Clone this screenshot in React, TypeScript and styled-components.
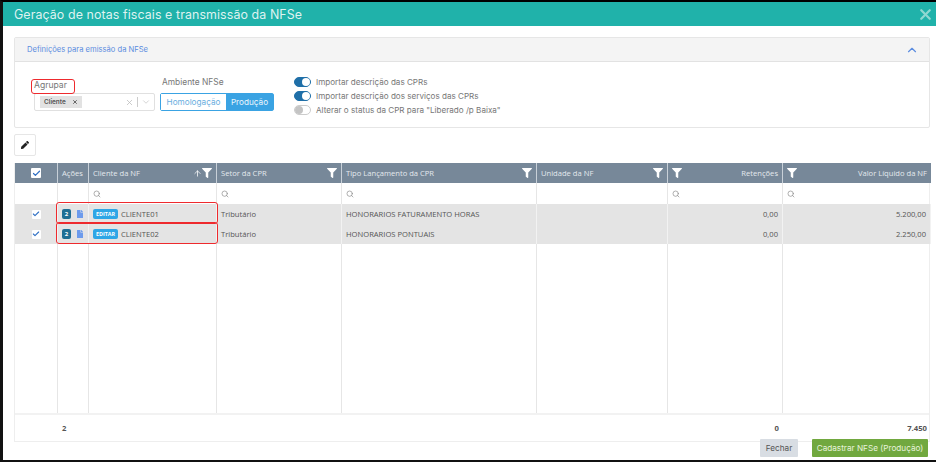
import React from 'react';
import styled, { createGlobalStyle } from 'styled-components';
import { FaFilter, FaFile, FaPen } from 'react-icons/fa';
import { Check, ChevronDown, ChevronUp, Search, X, ArrowUp } from 'lucide-react';

const GlobalStyle = createGlobalStyle`
  html, body { margin: 0; padding: 0; background: #fff; }
  * { box-sizing: border-box; }
`;

const COLUMNS = '43px 31px 128px 125px 195px 131px 115px 148px';

const Frame = styled.div`
  width: 936px;
  height: 462px;
  overflow: hidden;
  display: flex;
  flex-direction: column;
  border-top: 2px solid #000;
  border-bottom: 2px solid #111;
  border-left: 3px solid #111;
  font-family: 'Inter', 'Liberation Sans', sans-serif;
  color: #666;
  background: #fff;
`;

const ModalHeader = styled.header`
  height: 24px;
  flex: none;
  display: flex;
  align-items: center;
  justify-content: space-between;
  padding: 0 2px 0 11px;
  background: #20b2aa;
  color: #dff3f1;
  font-size: 12.4px;
  letter-spacing: 0.1px;
`;

const CloseMark = styled.span`
  display: flex;
  color: #8fd8d1;
`;

const Content = styled.div`
  flex: 1;
  display: flex;
  flex-direction: column;
  padding: 11px 6px 0 11px;
  min-height: 0;
`;

const Card = styled.section`
  height: 91px;
  flex: none;
  border: 1px solid #e6e6e6;
  border-radius: 2px;
`;

const CardHeader = styled.div`
  height: 24px;
  display: flex;
  align-items: center;
  justify-content: space-between;
  padding: 0 10px 0 12px;
  background: #f4f4f4;
  border-bottom: 1px solid #e2e2e2;
  color: #5c8de0;
  font-size: 7.6px;
`;

const CardBody = styled.div`
  display: flex;
  padding: 17px 0 0 19px;
`;

const GroupField = styled.div`
  width: 121px;
  margin-right: 5px;
`;

const GroupLabel = styled.div`
  position: relative;
  height: 14px;
  padding: 1px 0 0 0;
  font-size: 8.6px;
  color: #777;
  &::after {
    content: '';
    position: absolute;
    left: -3px;
    top: 0;
    width: 42px;
    height: 13px;
    border: 1.5px solid #ee2a2e;
    border-radius: 3px;
  }
`;

const SelectBox = styled.div`
  height: 18px;
  display: flex;
  align-items: center;
  border: 1px solid #e0e0e0;
  border-radius: 2px;
  padding: 0 3px 0 5px;
  color: #bbb;
`;

const Tag = styled.span`
  display: flex;
  align-items: center;
  gap: 6px;
  height: 12px;
  padding: 0 4px;
  background: #e2e2e2;
  color: #555;
  font-size: 6.4px;
  font-weight: 600;
  margin-right: auto;
`;

const Divider = styled.span`
  width: 1px;
  height: 10px;
  margin: 0 3px;
  background: #ccc;
`;

const EnvField = styled.div`
  width: 134px;
`;

const EnvLabel = styled.div`
  height: 13px;
  margin-top: -2px;
  padding: 0 0 0 2px;
  font-size: 8.4px;
  color: #777;
`;

const Segmented = styled.div`
  display: flex;
  width: 114px;
  height: 18px;
  border: 1px solid #3aa3e3;
  border-radius: 2px;
  margin-top: 3px;
`;

const Segment = styled.span<{ $active?: boolean }>`
  flex: ${(p) => (p.$active ? '0 0 47px' : '1')};
  display: flex;
  align-items: center;
  justify-content: center;
  font-size: 8.2px;
  background: ${(p) => (p.$active ? '#3aa3e3' : '#fff')};
  color: ${(p) => (p.$active ? '#eaf6fd' : '#6aaee0')};
`;

const SwitchList = styled.div`
  display: flex;
  flex-direction: column;
  gap: 4px;
  margin-top: -2px;
`;

const SwitchRow = styled.div`
  display: flex;
  align-items: center;
  gap: 5px;
  height: 10px;
  font-size: 8.1px;
  color: #777;
`;

const Toggle = styled.span<{ $on?: boolean }>`
  position: relative;
  width: 17px;
  height: 10px;
  flex: none;
  border-radius: 5px;
  background: ${(p) => (p.$on ? '#1f6fa8' : '#fff')};
  border: 1px solid ${(p) => (p.$on ? '#1f6fa8' : '#ccc')};
  &::after {
    content: '';
    position: absolute;
    top: 0;
    left: ${(p) => (p.$on ? '7px' : '0')};
    width: 8px;
    height: 8px;
    border-radius: 50%;
    background: ${(p) => (p.$on ? '#fff' : '#c4c4c4')};
  }
`;

const EditButton = styled.button`
  width: 22px;
  height: 22px;
  flex: none;
  margin-top: 6px;
  padding: 0;
  display: flex;
  align-items: center;
  justify-content: center;
  background: #fff;
  border: 1px solid #e6e6e6;
  border-radius: 2px;
  color: #222;
`;

const Table = styled.div`
  margin-top: 7px;
  height: 279px;
  flex: none;
  display: flex;
  flex-direction: column;
  border: 1px solid #eee;
  border-top: 0;
  font-family: 'Open Sans', 'Liberation Sans', sans-serif;
`;

const Row = styled.div<{ $grow?: boolean }>`
  position: relative;
  display: grid;
  grid-template-columns: ${COLUMNS};
  ${(p) => (p.$grow ? 'flex: 1;' : '')}
`;

const HeadCell = styled.div<{ $right?: boolean }>`
  height: 20px;
  display: flex;
  align-items: center;
  gap: 3px;
  padding: 0 4px;
  background: #778899;
  border-right: 1px solid #c8d0d8;
  color: #e4e9ee;
  font-size: 7.6px;
  ${(p) => (p.$right ? 'justify-content: space-between;' : '')}
  &:last-child { border-right: 0; }
`;

const HeadTitle = styled.span`
  margin-right: auto;
`;

const RightTitle = styled.span`
  margin-left: auto;
`;

const SearchCell = styled.div`
  height: 21px;
  display: flex;
  align-items: center;
  padding: 0 4px;
  border-right: 1px solid #e6e6e6;
  color: #888;
  &:last-child { border-right: 0; }
`;

const DataCell = styled.div<{ $right?: boolean; $center?: boolean }>`
  height: 20px;
  display: flex;
  align-items: center;
  gap: 3px;
  padding: 0 4px;
  background: #e4e4e4;
  border-right: 1px solid #f2f2f2;
  color: #555;
  font-size: 7.6px;
  ${(p) => (p.$right ? 'justify-content: flex-end;' : '')}
  ${(p) => (p.$center ? 'justify-content: center;' : '')}
  &:last-child { border-right: 0; }
`;

const EmptyCell = styled.div`
  border-right: 1px solid #e6e6e6;
  &:last-child { border-right: 0; }
`;

const HeadBox = styled.span`
  margin: 0 auto;
  width: 10px;
  height: 10px;
  display: flex;
  align-items: center;
  justify-content: center;
  background: #fff;
  border-radius: 1px;
  color: #2f6fc4;
`;

const RowBox = styled.span`
  width: 9px;
  height: 9px;
  display: flex;
  align-items: center;
  justify-content: center;
  background: #fff;
  border-radius: 1px;
  color: #2f6fc4;
`;

const CountBadge = styled.span`
  width: 11px;
  height: 10px;
  display: flex;
  align-items: center;
  justify-content: center;
  background: #1f6e94;
  border-radius: 2px;
  color: #fff;
  font-size: 6px;
  font-weight: 700;
`;

const EditTag = styled.span`
  height: 10px;
  width: 25px;
  display: flex;
  align-items: center;
  justify-content: center;
  background: #2ea6e6;
  border-radius: 2px;
  color: #fff;
  font-size: 5.4px;
  font-weight: 700;
`;

const FileIcon = styled.span`
  display: flex;
  margin-left: 2px;
  color: #6d9bec;
`;

const RowHighlight = styled.span`
  position: absolute;
  left: 41px;
  top: -2px;
  width: 162px;
  height: 22px;
  border: 1.5px solid #ee2a2e;
  border-radius: 3px;
  pointer-events: none;
`;

const TotalRow = styled.div`
  height: 28px;
  flex: none;
  display: grid;
  grid-template-columns: ${COLUMNS};
  align-items: center;
  border-top: 2px solid #f2f2f2;
  font-size: 7.7px;
  font-weight: 700;
  color: #555;
`;

const TotalCell = styled.div<{ $right?: boolean }>`
  padding: 0 4px;
  text-align: ${(p) => (p.$right ? 'right' : 'left')};
`;

const ModalFooter = styled.div`
  position: relative;
  margin-top: -3px;
  display: flex;
  justify-content: flex-end;
  gap: 14px;
  padding-right: 2px;
`;

const FooterButton = styled.button<{ $primary?: boolean }>`
  height: 18px;
  padding: 0;
  width: ${(p) => (p.$primary ? '116px' : '38px')};
  border: 0;
  border-radius: 1px;
  background: ${(p) => (p.$primary ? '#71a83f' : '#d8dde3')};
  color: ${(p) => (p.$primary ? '#e8f3dd' : '#555')};
  font-family: 'Inter', 'Liberation Sans', sans-serif;
  font-size: 8.2px;
`;

const rows = [
  { cliente: 'CLIENTE01', tipo: 'HONORARIOS FATURAMENTO HORAS', valor: '5.200,00' },
  { cliente: 'CLIENTE02', tipo: 'HONORARIOS PONTUAIS', valor: '2.250,00' },
];

const Funnel = () => <FaFilter size={10} color="#fff" />;

function App() {
  return (
    <Frame>
      <GlobalStyle />
      <ModalHeader>
        Geração de notas fiscais e transmissão da NFSe
        <CloseMark><X size={17} strokeWidth={3.2} /></CloseMark>
      </ModalHeader>
      <Content>
        <Card>
          <CardHeader>
            Definições para emissão da NFSe
            <ChevronUp size={14} strokeWidth={2} color="#5c8de0" />
          </CardHeader>
          <CardBody>
            <GroupField>
              <GroupLabel>Agrupar</GroupLabel>
              <SelectBox>
                <Tag>Cliente <X size={6} strokeWidth={3.5} /></Tag>
                <X size={9} strokeWidth={2} />
                <Divider />
                <ChevronDown size={10} strokeWidth={1.5} />
              </SelectBox>
            </GroupField>
            <EnvField>
              <EnvLabel>Ambiente NFSe</EnvLabel>
              <Segmented>
                <Segment>Homologação</Segment>
                <Segment $active>Produção</Segment>
              </Segmented>
            </EnvField>
            <SwitchList>
              <SwitchRow><Toggle $on />Importar descrição das CPRs</SwitchRow>
              <SwitchRow><Toggle $on />Importar descrição dos serviços das CPRs</SwitchRow>
              <SwitchRow><Toggle />Alterar o status da CPR para "Liberado /p Baixa"</SwitchRow>
            </SwitchList>
          </CardBody>
        </Card>
        <EditButton><FaPen size={8} /></EditButton>
        <Table>
          <Row>
            <HeadCell><HeadBox><Check size={9} strokeWidth={3.2} /></HeadBox></HeadCell>
            <HeadCell>Ações</HeadCell>
            <HeadCell>
              <HeadTitle>Cliente da NF</HeadTitle>
              <ArrowUp size={9} strokeWidth={2} color="#fff" style={{ marginRight: -3 }} />
              <Funnel />
            </HeadCell>
            <HeadCell $right>Setor da CPR<Funnel /></HeadCell>
            <HeadCell $right>Tipo Lançamento da CPR<Funnel /></HeadCell>
            <HeadCell $right>Unidade da NF<Funnel /></HeadCell>
            <HeadCell><Funnel /><RightTitle>Retenções</RightTitle></HeadCell>
            <HeadCell><Funnel /><RightTitle>Valor Líquido da NF</RightTitle></HeadCell>
          </Row>
          <Row>
            <SearchCell />
            <SearchCell />
            <SearchCell><Search size={8} /></SearchCell>
            <SearchCell><Search size={8} /></SearchCell>
            <SearchCell><Search size={8} /></SearchCell>
            <SearchCell />
            <SearchCell><Search size={8} /></SearchCell>
            <SearchCell><Search size={8} /></SearchCell>
          </Row>
          {rows.map((r) => (
            <Row key={r.cliente}>
              <DataCell $center><RowBox><Check size={8} strokeWidth={3.2} /></RowBox></DataCell>
              <DataCell>
                <CountBadge>2</CountBadge>
                <FileIcon><FaFile size={8} /></FileIcon>
              </DataCell>
              <DataCell><EditTag>EDITAR</EditTag>{r.cliente}</DataCell>
              <DataCell>Tributário</DataCell>
              <DataCell>{r.tipo}</DataCell>
              <DataCell />
              <DataCell $right>0,00</DataCell>
              <DataCell $right>{r.valor}</DataCell>
              <RowHighlight />
            </Row>
          ))}
          <Row $grow>
            <EmptyCell />
            <EmptyCell />
            <EmptyCell />
            <EmptyCell />
            <EmptyCell />
            <EmptyCell />
            <EmptyCell />
            <EmptyCell />
          </Row>
          <TotalRow>
            <TotalCell />
            <TotalCell>2</TotalCell>
            <TotalCell />
            <TotalCell />
            <TotalCell />
            <TotalCell />
            <TotalCell $right>0</TotalCell>
            <TotalCell $right>7.450</TotalCell>
          </TotalRow>
        </Table>
        <ModalFooter>
          <FooterButton>Fechar</FooterButton>
          <FooterButton $primary>Cadastrar NFSe (Produção)</FooterButton>
        </ModalFooter>
      </Content>
    </Frame>
  );
}

export default App;
